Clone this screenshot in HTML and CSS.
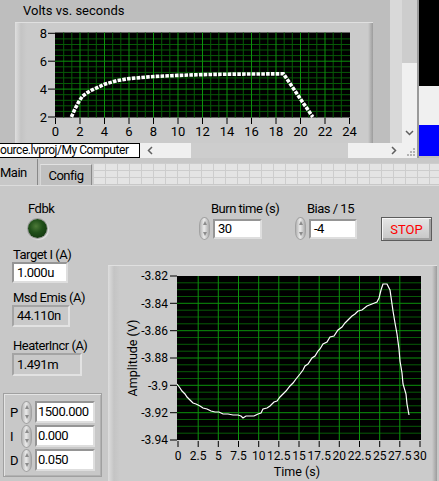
FILE: index.html
```html
<!DOCTYPE html>
<html lang="en">
<head>
  <meta charset="UTF-8">
  <title>Burn Control</title>
  <link rel="stylesheet" href="styles.css">
</head>
<body>
<div class="screen">

  <!-- upper window: waveform chart + scrollbars -->
  <div class="upper">
    <div class="upper-main">
      <div class="panel-top">
        <div class="vi-panel">
          <div class="caption">Volts vs. seconds</div>
          <div class="graph-frame graph-top">
            <svg width="358" height="121" viewBox="0 0 358 121">
              <rect x="40" y="9.5" width="295" height="85" fill="#000"/>
              <g stroke="#075a07" stroke-width="1">
                <path d="M48.7 9.5V94.5M56.8 9.5V94.5M73.2 9.5V94.5M81.3 9.5V94.5M97.7 9.5V94.5M105.8 9.5V94.5M122.2 9.5V94.5M130.3 9.5V94.5M146.7 9.5V94.5M154.8 9.5V94.5M171.2 9.5V94.5M179.3 9.5V94.5M195.7 9.5V94.5M203.8 9.5V94.5M220.2 9.5V94.5M228.3 9.5V94.5M244.7 9.5V94.5M252.8 9.5V94.5M269.2 9.5V94.5M277.3 9.5V94.5M293.7 9.5V94.5M301.8 9.5V94.5M318.2 9.5V94.5M326.3 9.5V94.5"/>
                <path d="M40 15.9H335M40 21.5H335M40 27.0H335M40 32.6H335M40 43.8H335M40 49.4H335M40 54.9H335M40 60.5H335M40 71.7H335M40 77.3H335M40 82.8H335M40 88.4H335"/>
              </g>
              <g stroke="#0c920c" stroke-width="1">
                <path d="M65 9.5V94.5M89.5 9.5V94.5M114 9.5V94.5M138.5 9.5V94.5M163 9.5V94.5M187.5 9.5V94.5M212 9.5V94.5M236.5 9.5V94.5M261 9.5V94.5M285.5 9.5V94.5M310 9.5V94.5"/>
                <path d="M40 38.2H335M40 66.1H335"/>
              </g>
              <polyline fill="none" stroke="#fff" stroke-width="3.6" stroke-dasharray="3.6 1.2"
                points="56.4,94 60.1,85.6 63.8,78.7 67.5,73.1 72.4,69.6 77.3,66.8 83.4,64 89.5,61.2 101.8,57.7 114,55.6 126.3,54.5 138.5,53.5 163,52.4 187.5,51.6 212,51.2 268.4,50.8 297.8,94"/>
              <g stroke="#000" stroke-width="1">
                <path d="M33 10.3H40M33 38.2H40M33 66.1H40M33 94H40"/>
                <path d="M40.5 95V101M65 95V101M89.5 95V101M114 95V101M138.5 95V101M163 95V101M187.5 95V101M212 95V101M236.5 95V101M261 95V101M285.5 95V101M310 95V101M334.5 95V101"/>
              </g>
              <g class="tick-y" text-anchor="end">
                <text x="32" y="14.8">8</text>
                <text x="32" y="42.7">6</text>
                <text x="32" y="70.6">4</text>
                <text x="32" y="98.5">2</text>
              </g>
              <g class="tick-x" text-anchor="middle">
                <text x="40.5" y="113">0</text>
                <text x="65" y="113">2</text>
                <text x="89.5" y="113">4</text>
                <text x="114" y="113">6</text>
                <text x="138.5" y="113">8</text>
                <text x="163" y="113">10</text>
                <text x="187.5" y="113">12</text>
                <text x="212" y="113">14</text>
                <text x="236.5" y="113">16</text>
                <text x="261" y="113">18</text>
                <text x="285.5" y="113">20</text>
                <text x="310" y="113">22</text>
                <text x="334.5" y="113">24</text>
              </g>
            </svg>
          </div>
        </div>
        <div class="vstrip"></div>
        <div class="vscroll">
          <div class="vthumb"></div>
          <svg class="chev" width="15" height="10" viewBox="0 0 15 10"><polyline points="4,3 7.5,6.5 11,3" fill="none" stroke="#606060" stroke-width="1.5"/></svg>
        </div>
      </div>
      <div class="hbar">
        <div class="path-box">ource.lvproj/My Computer</div>
        <div class="hscroll">
          <svg class="chev" width="12" height="15" viewBox="0 0 12 15"><polyline points="9,4 5.5,7.5 9,11" fill="none" stroke="#606060" stroke-width="1.5"/></svg>
          <div class="hthumb"></div>
          <svg class="chev right" width="12" height="15" viewBox="0 0 12 15"><polyline points="4,4 7.5,7.5 4,11" fill="none" stroke="#606060" stroke-width="1.5"/></svg>
          <svg class="grip" width="15" height="15" viewBox="0 0 15 15">
            <g fill="#b4b4b4"><rect x="11" y="5" width="2" height="2"/><rect x="8" y="8" width="2" height="2"/><rect x="11" y="8" width="2" height="2"/><rect x="5" y="11" width="2" height="2"/><rect x="8" y="11" width="2" height="2"/><rect x="11" y="11" width="2" height="2"/></g>
          </svg>
        </div>
      </div>
    </div>
    <div class="edge"></div>
    <div class="side">
      <div class="side-black"></div>
      <div class="side-light"></div>
      <div class="side-blue"></div>
    </div>
  </div>

  <!-- tab control -->
  <div class="tab-row">
    <div class="tab active"><span>Main</span></div>
    <div class="tab">Config</div>
    <div class="tab-fill"></div>
  </div>

  <div class="tab-body">
    <div class="left-col">
      <div class="lbl fdbk">Fdbk</div>
      <div class="led"></div>

      <div class="lbl gap-target">Target I (A)</div>
      <div class="num target">1.000u</div>

      <div class="lbl gap-msd">Msd Emis (A)</div>
      <div class="ind msd">44.110n</div>

      <div class="lbl gap-heater">HeaterIncr (A)</div>
      <div class="ind heater">1.491m</div>

      <div class="pid">
        <div class="pid-row">
          <span class="pid-lbl">P</span>
          <div class="spin"><i></i><i class="dn"></i></div>
          <div class="num pid-num">1500.000</div>
        </div>
        <div class="pid-row">
          <span class="pid-lbl">I</span>
          <div class="spin"><i></i><i class="dn"></i></div>
          <div class="num pid-num">0.000</div>
        </div>
        <div class="pid-row">
          <span class="pid-lbl">D</span>
          <div class="spin"><i></i><i class="dn"></i></div>
          <div class="num pid-num">0.050</div>
        </div>
      </div>
    </div>

    <div class="right-col">
      <div class="ctl-row">
        <div class="ctl burn">
          <div class="lbl ctl-lbl">Burn time (s)</div>
          <div class="ctl-input">
            <div class="spin"><i></i><i class="dn"></i></div>
            <div class="num small">30</div>
          </div>
        </div>
        <div class="ctl bias">
          <div class="lbl ctl-lbl">Bias / 15</div>
          <div class="ctl-input">
            <div class="spin"><i></i><i class="dn"></i></div>
            <div class="num small">-4</div>
          </div>
        </div>
        <button class="stop">STOP</button>
      </div>

      <div class="graph-frame graph-bottom">
        <svg width="329" height="216" viewBox="0 0 329 216">
          <rect x="69" y="10" width="244" height="164" fill="#000"/>
          <g stroke="#075a07" stroke-width="1">
            <path d="M69 16.8H313M69 23.7H313M69 30.5H313M69 44.2H313M69 51H313M69 57.8H313M69 71.5H313M69 78.3H313M69 85.2H313M69 98.8H313M69 105.7H313M69 112.5H313M69 126.2H313M69 133H313M69 139.8H313M69 153.5H313M69 160.3H313M69 167.2H313"/>
          </g>
          <g stroke="#0c920c" stroke-width="1">
            <path d="M90.2 10V174M110.3 10V174M130.5 10V174M150.7 10V174M170.8 10V174M191 10V174M211.2 10V174M231.3 10V174M251.5 10V174M271.7 10V174M291.8 10V174"/>
            <path d="M69 37.3H313M69 64.7H313M69 92H313M69 119.3H313M69 146.7H313"/>
          </g>
          <polyline fill="none" stroke="#fff" stroke-width="1.2"
            points="69,118 72,122 74,125 77,128 79,131 82,134 85,137 88,138 92,140 95,142 99,143 103,145 107,146 111,146 115,148 120,148 125,149 130,149 133,150 135,152 138,150 142,150 146,150 150,148 153,147 155,143 159,142 162,140 166,136 169,135 172,131 175,128 178,125 182,120 185,117 188,113 192,108 195,104 197,100 200,98 204,92 207,90 210,85 212,83 215,78 219,76 222,71 226,70 230,64 234,61 237,57 241,53 244,50 247,48 250,45 254,44 259,40 264,38 269,36 271,32 273,24 275,18 279,18 282,24 285,45 287,57 289,68 291,83 292,95 294,107 295,118 298,128 299,138 301,149"/>
          <g stroke="#000" stroke-width="1">
            <path d="M62 10H69M62 37.3H69M62 64.7H69M62 92H69M62 119.3H69M62 146.7H69M62 174H69"/>
            <path d="M70 175V181M90.2 175V181M110.3 175V181M130.5 175V181M150.7 175V181M170.8 175V181M191 175V181M211.2 175V181M231.3 175V181M251.5 175V181M271.7 175V181M291.8 175V181M312 175V181"/>
          </g>
          <g class="tick-small" text-anchor="end">
            <text x="60" y="14.2">-3.82</text>
            <text x="60" y="41.5">-3.84</text>
            <text x="60" y="68.9">-3.86</text>
            <text x="60" y="96.2">-3.88</text>
            <text x="60" y="123.5">-3.9</text>
            <text x="60" y="150.9">-3.92</text>
            <text x="60" y="178.2">-3.94</text>
          </g>
          <g class="tick-small" text-anchor="middle">
            <text x="70" y="194">0</text>
            <text x="90.2" y="194">2.5</text>
            <text x="110.3" y="194">5</text>
            <text x="130.5" y="194">7.5</text>
            <text x="150.7" y="194">10</text>
            <text x="170.8" y="194">12.5</text>
            <text x="191" y="194">15</text>
            <text x="211.2" y="194">17.5</text>
            <text x="231.3" y="194">20</text>
            <text x="251.5" y="194">22.5</text>
            <text x="271.7" y="194">25</text>
            <text x="291.8" y="194">27.5</text>
            <text x="312" y="194">30</text>
          </g>
          <text class="axis-name" x="189" y="210" text-anchor="middle">Time (s)</text>
          <text class="axis-name" x="0" y="0" text-anchor="middle" transform="translate(29 92) rotate(-90)">Amplitude (V)</text>
        </svg>
      </div>
    </div>
  </div>

</div>
</body>
</html>
```

FILE: styles.css
```css
/* base */
html, body { margin: 0; padding: 0; }
body {
  width: 439px;
  height: 481px;
  overflow: hidden;
  font-family: Roboto, "Liberation Sans", sans-serif;
  font-size: 13px;
  letter-spacing: -0.5px;
  color: #000;
}
.screen { width: 439px; height: 481px; overflow: hidden; background: #c8c8c8; }

/* upper window */
.upper { display: flex; height: 158px; }
.upper-main { width: 417px; display: flex; flex-direction: column; }
.panel-top { display: flex; height: 143px; }
.vi-panel { width: 390px; background: #bebebe; overflow: hidden; }
.caption { height: 22px; line-height: 22px; padding-left: 23px; white-space: nowrap; letter-spacing: 0; }

.graph-frame {
  background: linear-gradient(90deg, #dedede 0, #c4c4c4 6px, #cbcbcb 12px, #cbcbcb calc(100% - 5px), #9c9c9c 100%);
  border-top: 1px solid #e0e0e0;
  box-sizing: border-box;
}
.graph-frame svg { display: block; letter-spacing: 0; }
.graph-top { margin-left: 15px; width: 358px; height: 121px; }
.tick-x, .tick-y { font-family: Roboto, "Liberation Sans", sans-serif; font-size: 13px; fill: #000; }
.tick-small { font-family: Roboto, "Liberation Sans", sans-serif; font-size: 12px; fill: #000; }
.axis-name { font-family: Roboto, "Liberation Sans", sans-serif; font-size: 12.5px; fill: #000; }

.vstrip { width: 12px; background: #d9d9d9; }
.vscroll { width: 15px; background: #f0f0f0; display: flex; flex-direction: column; }
.vthumb { height: 63px; background: #cdcdcd; }
.vscroll .chev { margin-top: auto; margin-bottom: 5px; display: block; }

.hbar { display: flex; height: 15px; }
.path-box {
  width: 140px;
  box-sizing: border-box;
  background: #fff;
  border: 1px solid #000;
  border-left: 0;
  line-height: 13px;
  white-space: nowrap;
  overflow: hidden;
  font-size: 12px;
  letter-spacing: -0.45px;
}
.hscroll { flex: 1; display: flex; align-items: center; background: #f0f0f0; }
.hscroll .chev { display: block; margin-left: 3px; }
.hthumb { width: 157px; height: 15px; margin-left: 36px; background: #cdcdcd; }
.hscroll .chev.right { margin-left: 40px; }
.grip { display: block; margin-left: auto; }

.edge { width: 2px; background: #9a9a9a; }
.side { width: 20px; display: flex; flex-direction: column; background: #c0c0c0; }
.side-black { height: 86px; background: #000; }
.side-light { height: 39px; background: #f0f0f0; }
.side-blue { height: 31px; background: #0000ff; }

/* tabs */
.tab-row { display: flex; height: 27px; background: #c8c8c8; }
.tab { box-sizing: border-box; white-space: nowrap; }
.tab.active {
  width: 38px;
  margin-top: 1px;
  padding-top: 6px;
  border-right: 1px solid #888;
}
.tab.active span { display: block; }
.tab:not(.active) {
  width: 52px;
  margin: 6px 1px 0 2px;
  padding-top: 3px;
  text-align: center;
  background: #c0c0c0;
  border-top: 1px solid #e2e2e2;
  border-left: 1px solid #d6d6d6;
  border-right: 1px solid #8a8a8a;
}
.tab-fill {
  flex: 1;
  margin-top: 5px;
  height: 21px;
  background-color: #e4e4e4;
  background-image:
    linear-gradient(90deg, #cdcdcd 1px, transparent 1px),
    linear-gradient(#cdcdcd 1px, transparent 1px);
  background-size: 12px 100%, 100% 7px;
}

/* tab content */
.tab-body {
  display: flex;
  height: 296px;
  background: #c8c8c8;
  border-top: 1px solid #dcdcdc;
  box-sizing: border-box;
}
.left-col { width: 108px; display: flex; flex-direction: column; }
.right-col { flex: 1; display: flex; flex-direction: column; }

.lbl { line-height: 15px; white-space: nowrap; padding-left: 13px; }
.fdbk { margin-top: 15px; padding-left: 28px; }
.led {
  width: 19px;
  height: 19px;
  margin: 3px 0 0 28px;
  border-radius: 50%;
  background: radial-gradient(circle at 42% 38%, #4d7a38 0, #21501a 40%, #0b2a08 100%);
  box-shadow: 0 0 0 1px #9c9c9c, 1px 1px 1px 1px #e2e2e2;
}
.gap-target { margin-top: 9px; }
.gap-msd { margin-top: 7px; }
.gap-heater { margin-top: 11px; }

.num, .ind {
  box-sizing: border-box;
  border: 2px solid;
  padding-left: 3px;
  white-space: nowrap;
  overflow: hidden;
}
.num { background: #fff; border-color: #959595 #dedede #dedede #959595; }
.ind { background: #c9c9c9; border-color: #a4a4a4 #e2e2e2 #e2e2e2 #a4a4a4; }
.target { margin-left: 12px; width: 56px; height: 21px; line-height: 17px; }
.msd { margin-left: 12px; width: 58px; height: 22px; line-height: 18px; }
.heater { margin-left: 12px; width: 70px; height: 23px; line-height: 19px; }

/* PID cluster */
.pid {
  margin: 17px 0 0 3px;
  width: 99px;
  height: 84px;
  box-sizing: border-box;
  border: 1px solid #a0a0a0;
  box-shadow: inset 1px 1px 0 #e4e4e4, inset -1px -1px 0 #b2b2b2;
  padding-top: 7px;
  display: flex;
  flex-direction: column;
  gap: 2px;
}
.pid-row { display: flex; align-items: center; height: 22px; }
.pid-lbl { width: 17px; box-sizing: border-box; padding-left: 6px; }
.pid-num { margin-left: 3px; width: 60px; height: 22px; line-height: 18px; padding-left: 1px; }

/* spinner arrows */
.spin {
  width: 11px;
  height: 23px;
  box-sizing: border-box;
  border: 1px solid #a2a2a2;
  border-radius: 6px / 9px;
  background: linear-gradient(90deg, #b4b4b4, #ebebeb 45%, #acacac);
  display: flex;
  flex-direction: column;
  align-items: center;
  justify-content: space-around;
  flex-shrink: 0;
}
.spin i {
  width: 0;
  height: 0;
  border-left: 2.5px solid transparent;
  border-right: 2.5px solid transparent;
  border-bottom: 4px solid #8c8c8c;
}
.spin i.dn { border-bottom: 0; border-top: 4px solid #8c8c8c; }

/* top controls */
.ctl-row { display: flex; margin-top: 15px; height: 40px; }
.ctl { display: flex; flex-direction: column; }
.ctl.burn { margin-left: 91px; width: 80px; }
.ctl.bias { margin-left: 16px; width: 62px; }
.ctl-lbl { padding-left: 12px; }
.ctl-input { display: flex; align-items: center; margin-top: 1px; }
.num.small { margin-left: 3px; width: 49px; height: 20px; line-height: 16px; }

.stop {
  margin: 16px 0 0 24px;
  width: 51px;
  height: 24px;
  padding: 0;
  border: 1px solid #5c5c5c;
  background: linear-gradient(#e6e6e6, #c6c6c6);
  box-shadow: inset 1px 1px 0 #f6f6f6, inset -2px -2px 0 #a2a2a2;
  color: #ff0000;
  font-family: Roboto, "Liberation Sans", sans-serif;
  font-size: 13px;
  letter-spacing: 0;
}

.graph-bottom { margin-top: 24px; width: 329px; height: 216px; }
```
